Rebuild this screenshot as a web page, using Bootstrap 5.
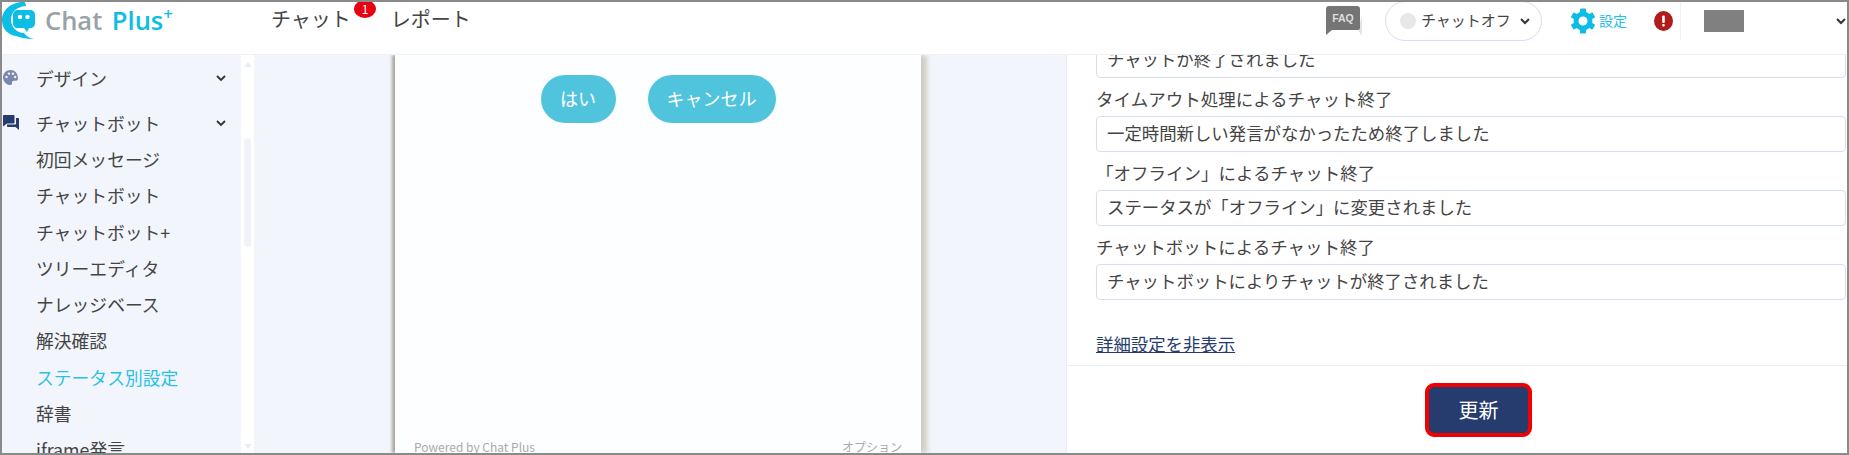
<!DOCTYPE html>
<html lang="ja">
<head>
    <meta charset="UTF-8">
    <title>Chat Plus</title>
    <link rel="stylesheet" href="https://cdn.jsdelivr.net/npm/bootstrap@5.3.0/dist/css/bootstrap.min.css">
    <style>
        html, body { height: 100%; overflow: hidden; }
        body {
            background: #fff;
            color: #444;
            font-family: "Noto Sans CJK JP", "Noto Sans", sans-serif;
        }
        .frame {
            width: 1849px;
            height: 455px;
            border: 2px solid #8a8a8a;
            overflow: hidden;
        }
        /* header */
        .topbar {
            height: 53px;
            flex: none;
            background: #fff;
            border-bottom: 1px solid #eef1f8;
            padding-bottom: 15px;
        }
        .logo-box { width: 269px; }
        .logo-word {
            font-family: "Open Sans", "Liberation Sans", sans-serif;
            font-size: 25.5px;
            font-weight: 600;
            line-height: 1;
            color: #98a2a8;
            margin-left: 9px;
        }
        .logo-word b { color: #0cbde6; font-weight: 600; margin-left: 3px; }
        .logo-word sup { color: #0cbde6; font-size: 17px; top: -.55em; }
        .top-link { font-size: 20px; color: #444; text-decoration: none; line-height: 1; margin-bottom: 4px; }
        .top-report { margin-left: 40px; }
        .top-count {
            top: -9px;
            left: 83px;
            width: 22px;
            height: 18px;
            border-radius: 50%;
            background: #e60012;
            color: #fff;
            font-size: 12px;
            line-height: 18px;
            text-align: center;
        }
        .status-pill {
            width: 157px;
            height: 40px;
            margin-left: 21px;
            border: 1px solid #d5def2;
            border-radius: 20px;
            font-size: 15px;
            padding-left: 14px;
            color: #444;
        }
        .status-dot { width: 16px; height: 16px; border-radius: 50%; background: #e8e8e8; margin-right: 5px; }
        .gear-icon { margin-left: 28px; }
        .gear-word { color: #1cc0ea; font-size: 14px; margin-left: 3px; }
        .alert-icon { margin-left: 27px; }
        .user-box { height: 38px; margin-left: 7px; border-left: 1px solid #eef1f8; padding-left: 23px; width: 167px; }
        .user-block { width: 40px; height: 22px; background: #808080; }
        /* side menu */
        .side-menu { width: 239px; flex: none; background: #f2f5fb; overflow: hidden; }
        .side-row { height: 36.3px; font-size: 17.8px; color: #444; padding-left: 34px; line-height: 36.3px; white-space: nowrap; }
        .side-row.is-head { height: 36px; line-height: 36px; padding-right: 14px; position: relative; margin-top: 9px; }
        .side-row.is-head:first-child { margin-top: 5px; }
        .side-row.is-active { color: #29c1e8; }
        .side-icon { left: 1px; top: 10px; }
        .side-scroll { width: 13px; flex: none; background: #fff; }
        .scroll-thumb { width: 7px; height: 109px; margin: 71px auto 0; background: #f0f3f9; border-radius: 4px; }
        .tri-up, .tri-down { width: 0; height: 0; border-left: 4px solid transparent; border-right: 4px solid transparent; margin: 0 auto; }
        .tri-up { border-bottom: 5px solid #e9edf6; margin-top: 7px; }
        .tri-down { border-top: 5px solid #e9edf6; margin-top: 197px; }
        /* preview */
        .mid-col { width: 812px; flex: none; background: #f2f5fb; padding-left: 141px; padding-right: 145px; overflow: hidden; }
        .preview-box {
            height: 100%;
            background: #fdfeff;
            box-shadow: -3px 0 3px #a9a69d, 6px 0 5px #d0cdc5;
            padding: 0 19px;
        }
        .preview-btn { height: 48px; background: #50c4dd; color: #fff; border-radius: 24px; font-size: 18px; line-height: 46px; text-align: center; }
        .preview-gap { gap: 32px; margin-top: 20px; }
        .preview-foot { font-size: 12px; color: #aaa; line-height: 1; }
        /* right panel */
        .form-col { flex: 1; min-width: 0; background: #fff; border-left: 1px solid #e9edf7; overflow: hidden; }
        .form-scroll { height: 311px; padding: 0 1px 0 29px; overflow: hidden; border-bottom: 1px solid #e9edf7; flex: none; }
        .form-stack { margin-top: -13px; }
        .field-label { font-size: 17.5px; color: #444; line-height: 34px; height: 38px; padding-top: 4px; margin: 0; white-space: nowrap; }
        .field-input {
            height: 36px;
            border: 1px solid #d5def2;
            border-radius: 4px;
            font-size: 17.4px;
            line-height: 31px;
            padding: 0 10px;
            color: #444;
            white-space: nowrap;
        }
        .detail-link { display: inline-block; margin-top: 30px; font-size: 17.4px; line-height: 28px; color: #263b6e; }
        .save-row { padding: 17px 0 0 43px; }
        .save-btn {
            width: 107px;
            height: 54px;
            background: #263b6e;
            border: 4px solid #f00000;
            border-radius: 9px;
            color: #fff;
            font-size: 20px;
            padding: 0;
        }
        .save-btn:hover { background: #263b6e; color: #fff; border-color: #f00000; }
    </style>
</head>
<body>
<div class="frame d-flex flex-column">

    <!-- header -->
    <div class="topbar d-flex align-items-center">
        <div class="logo-box d-flex align-items-center">
            <svg width="34" height="38" viewBox="0 0 34 38">
                <path d="M22 0C9 0 0 8 0 18c0 9 6 15 14 16 5 2 11 3 18 3-5-1-8-3-10-6-7 0-13-6-13-13S13 5 24 4c0-2-1-4-2-4z" fill="#0cbde6"/>
                <path d="M16 8h12c3 0 5 2 5 5v8c0 3-2 5-5 5h-1l-2 4-3-4h-6c-3 0-5-2-5-5v-8c0-3 2-5 5-5z" fill="#0cbde6"/>
                <circle cx="18" cy="15" r="2.200" fill="#fff"/>
                <circle cx="25.500" cy="15" r="2.200" fill="#fff"/>
            </svg>
            <span class="logo-word">Chat<b> Plus<sup>+</sup></b></span>
        </div>
        <a class="top-link position-relative" href="#">チャット<span class="top-count position-absolute">1</span></a>
        <a class="top-link top-report" href="#">レポート</a>

        <div class="ms-auto d-flex align-items-center">
            <svg width="38" height="30" viewBox="0 0 38 30">
                <path d="M32 24l4 6V10z" fill="#e6e4dc"/>
                <path d="M3 0h28c2 0 3 1 3 3v19c0 1-1 2-2 2H6l-6 5V3c0-2 1-3 3-3z" fill="#757575"/>
                <text x="17" y="16" text-anchor="middle" font-family="Liberation Sans, sans-serif" font-size="10.5" font-weight="700" fill="#ddd">FAQ</text>
            </svg>
            <div class="status-pill d-flex align-items-center">
                <span class="status-dot"></span>チャットオフ
                <svg class="ms-2" width="12" height="8" viewBox="0 0 12 8"><path d="M2 2l4 4 4-4" fill="none" stroke="#333" stroke-width="2"/></svg>
            </div>
            <svg class="gear-icon" width="26" height="26" viewBox="0 0 26 26">
                <g fill="#0cbde6">
                    <circle cx="13" cy="13" r="9.500"/>
                    <rect x="10" y="0.500" width="6" height="25" rx="1"/>
                    <rect x="10" y="0.500" width="6" height="25" rx="1" transform="rotate(60 13 13)"/>
                    <rect x="10" y="0.500" width="6" height="25" rx="1" transform="rotate(120 13 13)"/>
                </g>
                <circle cx="13" cy="13" r="4.500" fill="#fff"/>
            </svg>
            <span class="gear-word">設定</span>
            <svg class="alert-icon" width="19" height="20" viewBox="0 0 19 20">
                <ellipse cx="9.500" cy="10" rx="9.500" ry="10" fill="#b01c1c"/>
                <rect x="8.200" y="4.500" width="2.600" height="7.500" rx="1" fill="#fff"/>
                <rect x="8.200" y="13" width="2.600" height="2.600" rx="1" fill="#fff"/>
            </svg>
            <div class="user-box d-flex align-items-center">
                <span class="user-block"></span>
                <svg class="ms-auto" width="12" height="8" viewBox="0 0 12 8"><path d="M2 2l4 4 4-4" fill="none" stroke="#333" stroke-width="2"/></svg>
            </div>
        </div>
    </div>

    <div class="d-flex flex-grow-1" style="min-height:0">
        <!-- side menu -->
        <div class="side-menu">
            <div class="side-row is-head d-flex justify-content-between align-items-center">
                <svg class="side-icon position-absolute" width="15" height="15" viewBox="0 0 15 15">
                    <path d="M7.500 0C3.400 0 0 3.200 0 7.200S3.400 15 7.500 15c1.200 0 1.800-.8 1.500-1.900-.4-1.300.5-2.300 1.700-2.300H13c1.200 0 2-1 2-2.500C15 3.500 11.700 0 7.500 0z" fill="#7d86ad"/>
                    <circle cx="3.500" cy="7" r="1.200" fill="#f2f5fb"/>
                    <circle cx="6" cy="3.600" r="1.200" fill="#f2f5fb"/>
                    <circle cx="10" cy="3.800" r="1.200" fill="#f2f5fb"/>
                    <circle cx="12.200" cy="7" r="1.200" fill="#f2f5fb"/>
                </svg>
                デザイン
                <svg width="12" height="8" viewBox="0 0 12 8"><path d="M2 2l4 4 4-4" fill="none" stroke="#333" stroke-width="1.800"/></svg>
            </div>
            <div class="side-row is-head d-flex justify-content-between align-items-center">
                <svg class="side-icon position-absolute" width="16" height="15" viewBox="0 0 16 15">
                    <path d="M1 0h9.500c.6 0 1 .4 1 1v6.500c0 .6-.4 1-1 1H4L0 11.500V1c0-.6.400-1 1-1z" fill="#263b6e"/>
                    <path d="M13 3h2c.6 0 1 .4 1 1v11l-3.500-3H5c-.6 0-1-.4-1-1v-1.500h8c.6 0 1-.4 1-1z" fill="#263b6e"/>
                </svg>
                チャットボット
                <svg width="12" height="8" viewBox="0 0 12 8"><path d="M2 2l4 4 4-4" fill="none" stroke="#333" stroke-width="1.800"/></svg>
            </div>
            <div class="side-row">初回メッセージ</div>
            <div class="side-row">チャットボット</div>
            <div class="side-row">チャットボット+</div>
            <div class="side-row">ツリーエディタ</div>
            <div class="side-row">ナレッジベース</div>
            <div class="side-row">解決確認</div>
            <div class="side-row is-active">ステータス別設定</div>
            <div class="side-row">辞書</div>
            <div class="side-row">iframe発言</div>
        </div>
        <div class="side-scroll">
            <div class="tri-up"></div>
            <div class="scroll-thumb"></div>
            <div class="tri-down"></div>
        </div>

        <!-- preview -->
        <div class="mid-col">
            <div class="preview-box d-flex flex-column">
                <div class="preview-gap d-flex justify-content-center">
                    <div class="preview-btn" style="width:75px">はい</div>
                    <div class="preview-btn" style="width:128px">キャンセル</div>
                </div>
                <div class="preview-foot d-flex justify-content-between mt-auto">
                    <span>Powered by Chat Plus</span><span>オプション</span>
                </div>
            </div>
        </div>

        <!-- form -->
        <div class="form-col d-flex flex-column">
            <div class="form-scroll">
                <div class="form-stack">
                    <div class="field-input">チャットが終了されました</div>
                    <p class="field-label">タイムアウト処理によるチャット終了</p>
                    <div class="field-input">一定時間新しい発言がなかったため終了しました</div>
                    <p class="field-label">「オフライン」によるチャット終了</p>
                    <div class="field-input">ステータスが「オフライン」に変更されました</div>
                    <p class="field-label">チャットボットによるチャット終了</p>
                    <div class="field-input">チャットボットによりチャットが終了されました</div>
                    <a class="detail-link" href="#">詳細設定を非表示</a>
                </div>
            </div>
            <div class="save-row text-center">
                <button class="btn save-btn" type="button">更新</button>
            </div>
        </div>
    </div>
</div>
<script src="https://cdn.jsdelivr.net/npm/bootstrap@5.3.0/dist/js/bootstrap.bundle.min.js"></script>
</body>
</html>
